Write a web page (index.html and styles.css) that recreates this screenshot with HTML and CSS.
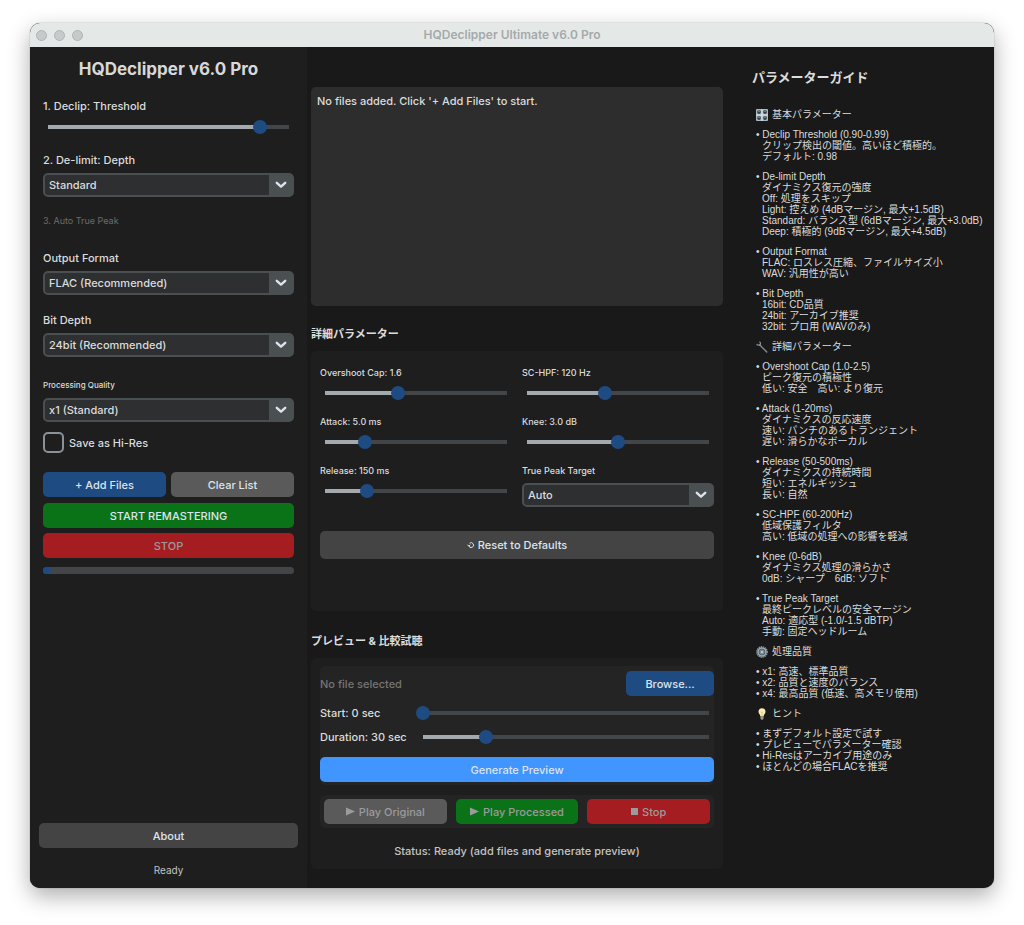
FILE: index.html
```html
<!DOCTYPE html>
<html lang="ja">
<head>
  <meta charset="UTF-8">
  <meta name="viewport" content="width=device-width, initial-scale=1">
  <title>HQDeclipper Ultimate v6.0 Pro</title>
  <link rel="stylesheet" href="styles.css">
</head>
<body>

  <svg width="0" height="0" class="defs" aria-hidden="true">
    <symbol id="chevron" viewBox="0 0 12 8"><path d="M1.8 1.8 6 5.6l4.2-3.8" fill="none" stroke="#dce4ee" stroke-width="2.4" stroke-linecap="round" stroke-linejoin="round"/></symbol>
    <symbol id="play" viewBox="0 0 8 8"><path d="M0 .5 8 4 0 7.5z" fill="currentColor"/></symbol>
  </svg>

  <div class="window">
    <header class="titlebar">
      <div class="lights"><span></span><span></span><span></span></div>
      <div class="titlebar-text">HQDeclipper Ultimate v6.0 Pro</div>
    </header>

    <div class="content">
      <aside class="sidebar">
        <div class="controls">
          <h1>HQDeclipper v6.0 Pro</h1>

          <label for="threshold" class="label">1. Declip: Threshold</label>
          <input type="range" id="threshold" min="0" max="100" value="88" style="--fill: 88%">

          <label for="depth" class="label">2. De-limit: Depth</label>
          <div class="select">
            <select id="depth"><option>Off</option><option>Light</option><option selected>Standard</option><option>Deep</option></select>
            <span class="arrow"><svg><use href="#chevron"/></svg></span>
          </div>

          <p class="hint">3. Auto True Peak</p>

          <label for="format" class="label">Output Format</label>
          <div class="select">
            <select id="format"><option>FLAC (Recommended)</option><option>WAV</option></select>
            <span class="arrow"><svg><use href="#chevron"/></svg></span>
          </div>

          <label for="bits" class="label">Bit Depth</label>
          <div class="select">
            <select id="bits"><option>24bit (Recommended)</option><option>16bit</option><option>32bit</option></select>
            <span class="arrow"><svg><use href="#chevron"/></svg></span>
          </div>

          <label for="quality" class="label small-label">Processing Quality</label>
          <div class="select">
            <select id="quality"><option>x1 (Standard)</option><option>x2</option><option>x4</option></select>
            <span class="arrow"><svg><use href="#chevron"/></svg></span>
          </div>

          <label class="check"><input type="checkbox"> Save as Hi-Res</label>

          <div class="file-buttons">
            <button class="btn blue">+ Add Files</button>
            <button class="btn gray">Clear List</button>
          </div>
          <button class="btn green start">START REMASTERING</button>
          <button class="btn red stop" disabled>STOP</button>
          <div class="progress"><span style="width: 3%"></span></div>
        </div>

        <button class="btn dark about">About</button>
        <p class="ready">Ready</p>
      </aside>

      <main class="main">
        <textarea class="file-list" aria-label="Files" readonly>No files added. Click '+ Add Files' to start.</textarea>

        <h2>詳細パラメーター</h2>
        <section class="panel advanced">
          <div class="params">
            <div class="param">
              <label for="overshoot">Overshoot Cap: 1.6</label>
              <input type="range" id="overshoot" min="0" max="100" value="40" style="--fill: 40%">
            </div>
            <div class="param">
              <label for="hpf">SC-HPF: 120 Hz</label>
              <input type="range" id="hpf" min="0" max="100" value="43" style="--fill: 43%">
            </div>
            <div class="param">
              <label for="attack">Attack: 5.0 ms</label>
              <input type="range" id="attack" min="0" max="100" value="22" style="--fill: 22%">
            </div>
            <div class="param">
              <label for="knee">Knee: 3.0 dB</label>
              <input type="range" id="knee" min="0" max="100" value="50" style="--fill: 50%">
            </div>
            <div class="param">
              <label for="release">Release: 150 ms</label>
              <input type="range" id="release" min="0" max="100" value="23" style="--fill: 23%">
            </div>
            <div class="param">
              <label for="peak">True Peak Target</label>
              <div class="select">
                <select id="peak"><option>Auto</option></select>
                <span class="arrow"><svg><use href="#chevron"/></svg></span>
              </div>
            </div>
          </div>
          <button class="btn dark reset">
            <svg class="reset-icon" viewBox="0 0 8 8"><path d="M2.6 2.3A2.4 2.4 0 1 1 1.8 4.6M.4 3.6l1.5 1.6L3.3 3.8" fill="none" stroke="currentColor"/></svg>
            Reset to Defaults
          </button>
        </section>

        <h2 class="preview-title">プレビュー &amp; 比較試聴</h2>
        <section class="panel preview">
          <div class="preview-form">
            <div class="file-row">
              <span>No file selected</span>
              <button class="btn blue browse">Browse...</button>
            </div>
            <div class="range-row">
              <label for="start">Start: 0 sec</label>
              <input type="range" id="start" min="0" max="100" value="0" style="--fill: 0%">
            </div>
            <div class="range-row">
              <label for="duration">Duration: 30 sec</label>
              <input type="range" id="duration" min="0" max="100" value="22" style="--fill: 22%">
            </div>
            <button class="btn light-blue generate">Generate Preview</button>
          </div>
          <div class="player">
            <button class="btn gray" disabled><svg class="glyph"><use href="#play"/></svg>Play Original</button>
            <button class="btn green" disabled><svg class="glyph"><use href="#play"/></svg>Play Processed</button>
            <button class="btn red" disabled><span class="square"></span>Stop</button>
          </div>
          <p class="status">Status: Ready (add files and generate preview)</p>
        </section>
      </main>

      <aside class="guide">
        <h2>パラメーターガイド</h2>
        <div class="guide-text">
          <h3>
            <svg viewBox="0 0 12 12"><rect width="12" height="12" rx="1" fill="#a9bac4"/><path d="M6 0v12M0 6h12" stroke="#dde5e9"/><g fill="#34424b"><circle cx="3" cy="3" r="1.9"/><circle cx="9" cy="3" r="1.9"/><circle cx="3" cy="9" r="1.9"/><circle cx="9" cy="9" r="1.9"/></g><path d="M3 1.5V3M9 1.5V3M3 7.5V9M9 7.5V9" stroke="#dde5e9" stroke-width=".7"/></svg>
            基本パラメーター
          </h3>
          <dl>
            <dt>• Declip Threshold (0.90-0.99)</dt>
            <dd>クリップ検出の閾値。高いほど積極的。</dd>
            <dd>デフォルト: 0.98</dd>
          </dl>
          <dl>
            <dt>• De-limit Depth</dt>
            <dd>ダイナミクス復元の強度</dd>
            <dd>Off: 処理をスキップ</dd>
            <dd>Light: 控えめ (4dBマージン, 最大+1.5dB)</dd>
            <dd>Standard: バランス型 (6dBマージン, 最大+3.0dB)</dd>
            <dd>Deep: 積極的 (9dBマージン, 最大+4.5dB)</dd>
          </dl>
          <dl>
            <dt>• Output Format</dt>
            <dd>FLAC: ロスレス圧縮、ファイルサイズ小</dd>
            <dd>WAV: 汎用性が高い</dd>
          </dl>
          <dl>
            <dt>• Bit Depth</dt>
            <dd>16bit: CD品質</dd>
            <dd>24bit: アーカイブ推奨</dd>
            <dd>32bit: プロ用 (WAVのみ)</dd>
          </dl>

          <h3>
            <svg viewBox="0 0 12 12"><path d="M3.6 3.8 10.8 11" stroke="#7b8790" stroke-width="1.5" stroke-linecap="round"/><path d="M.8 2.8a2 2 0 0 0 3.4.8A2 2 0 0 0 3.4.8" fill="none" stroke="#8b979f" stroke-width="1.2"/></svg>
            詳細パラメーター
          </h3>
          <dl>
            <dt>• Overshoot Cap (1.0-2.5)</dt>
            <dd>ピーク復元の積極性</dd>
            <dd>低い: 安全　高い: より復元</dd>
          </dl>
          <dl>
            <dt>• Attack (1-20ms)</dt>
            <dd>ダイナミクスの反応速度</dd>
            <dd>速い: パンチのあるトランジェント</dd>
            <dd>遅い: 滑らかなボーカル</dd>
          </dl>
          <dl>
            <dt>• Release (50-500ms)</dt>
            <dd>ダイナミクスの持続時間</dd>
            <dd>短い: エネルギッシュ</dd>
            <dd>長い: 自然</dd>
          </dl>
          <dl>
            <dt>• SC-HPF (60-200Hz)</dt>
            <dd>低域保護フィルタ</dd>
            <dd>高い: 低域の処理への影響を軽減</dd>
          </dl>
          <dl>
            <dt>• Knee (0-6dB)</dt>
            <dd>ダイナミクス処理の滑らかさ</dd>
            <dd>0dB: シャープ　6dB: ソフト</dd>
          </dl>
          <dl>
            <dt>• True Peak Target</dt>
            <dd>最終ピークレベルの安全マージン</dd>
            <dd>Auto: 適応型 (-1.0/-1.5 dBTP)</dd>
            <dd>手動: 固定ヘッドルーム</dd>
          </dl>

          <h3>
            <svg viewBox="0 0 12 12"><circle cx="6" cy="6" r="5.2" fill="none" stroke="#8796a0" stroke-width="1.4" stroke-dasharray="1.3 .75"/><circle cx="6" cy="6" r="4" fill="#4a5760" stroke="#9aabb5" stroke-width="1.6"/><path d="M6 2.500v7M2.500 6h7M3.500 3.500l5 5M8.500 3.500l-5 5" stroke="#8fa0ab" stroke-width=".7"/><circle cx="6" cy="6" r="1.500" fill="#b5c4cd"/></svg>
            処理品質
          </h3>
          <ul>
            <li>• x1: 高速、標準品質</li>
            <li>• x2: 品質と速度のバランス</li>
            <li>• x4: 最高品質 (低速、高メモリ使用)</li>
          </ul>

          <h3>
            <svg viewBox="0 0 12 12"><path d="M6 .3a3.5 3.5 0 0 0-3.5 3.5C2.5 5.8 4.2 6.3 4.400 8.600h3.200C7.800 6.300 9.500 5.800 9.500 3.800A3.500 3.500 0 0 0 6 .3z" fill="#fbedb8"/><path d="M5 3.500 6 5l1-1.500M6 5v3.500" fill="none" stroke="#d9b452" stroke-width=".6"/><path d="M4.500 8.600h3v2L6.700 11.700H5.300l-.8-1.100z" fill="#9a9a90"/></svg>
            ヒント
          </h3>
          <ul>
            <li>• まずデフォルト設定で試す</li>
            <li>• プレビューでパラメーター確認</li>
            <li>• Hi-Resはアーカイブ用途のみ</li>
            <li>• ほとんどの場合FLACを推奨</li>
          </ul>
        </div>
      </aside>
    </div>
  </div>

</body>
</html>
```
FILE: styles.css
```css
* {
  box-sizing: border-box;
}

body {
  margin: 0;
  min-height: 100vh;
  padding: 23px 30px 37px;
  display: flex;
  background: #fff;
  color: #dcdcdc;
  font-family: Inter, "Noto Sans CJK JP", sans-serif;
  font-size: 11px;
  font-weight: 500;
  line-height: 20px;
}

h1, h2, h3, p, dl, dd, ul {
  margin: 0;
  padding: 0;
}

button, select, input, textarea {
  font: inherit;
  color: inherit;
  margin: 0;
}

.defs {
  position: absolute;
}

.window {
  flex: 1;
  min-width: 0;
  display: flex;
  flex-direction: column;
  border-radius: 10px;
  overflow: hidden;
  background: #191919;
  box-shadow: 0 0 1px rgba(0, 0, 0, 0.6), 0 8px 22px rgba(0, 0, 0, 0.32);
}

/* title bar */
.titlebar {
  height: 24px;
  flex: none;
  display: grid;
  grid-template-columns: 1fr auto 1fr;
  align-items: center;
  background: #e4e9e8;
  color: #a6a9a9;
  font-size: 12px;
  font-weight: 600;
}

.lights {
  display: flex;
  gap: 7px;
  padding-left: 6px;
}

.lights span {
  width: 11px;
  height: 11px;
  border-radius: 50%;
  background: #c6caca;
  border: 1px solid #afb3b3;
}

.content {
  flex: 1;
  display: flex;
}

/* sidebar */
.sidebar {
  flex: 0 0 277px;
  display: flex;
  flex-direction: column;
  padding: 10px 9px 8px;
  background: #1e1e1e;
}

.controls {
  display: flex;
  flex-direction: column;
  padding: 0 4px;
  margin-bottom: auto;
}

h1 {
  font-size: 17px;
  line-height: 24px;
  text-align: center;
  color: #d8d8d8;
}

.label {
  margin: 15px 0 3px;
}

.small-label {
  margin-top: 18px;
  font-size: 8px;
}

.hint {
  margin: 14px 0 2px;
  font-size: 9px;
  font-weight: 400;
  color: #6c6c6c;
}

/* sliders */
input[type="range"] {
  appearance: none;
  display: block;
  height: 16px;
  margin: 0 -2px;
  background: linear-gradient(to right, #a4a9ad var(--fill), #434648 var(--fill)) center / calc(100% - 14px) 4px no-repeat;
}

input[type="range"]::-webkit-slider-thumb {
  appearance: none;
  width: 14px;
  height: 14px;
  border-radius: 50%;
  background: #1f4b83;
}

/* dropdowns */
.select {
  display: flex;
  height: 24px;
  border: 2px solid #4a4f51;
  border-radius: 5px;
  background: #2e2f31;
}

.select select {
  appearance: none;
  flex: 1;
  min-width: 0;
  border: 0;
  padding: 0 4px;
  background: none;
}

.arrow {
  width: 23px;
  display: flex;
  align-items: center;
  justify-content: center;
  background: #4a4f51;
}

.arrow svg {
  width: 12px;
  height: 8px;
}

.check {
  display: flex;
  align-items: center;
  gap: 5px;
  margin-top: 10px;
}

.check input {
  appearance: none;
  width: 21px;
  height: 21px;
  border: 2px solid #8b9297;
  border-radius: 5px;
}

/* buttons */
.btn {
  height: 25px;
  border: 0;
  border-radius: 5px;
  padding: 0;
  display: flex;
  align-items: center;
  justify-content: center;
  color: #dce4ee;
}

.btn:disabled {
  color: #9b9b9b;
}

.blue { background: #1f4b83; }
.gray { background: #5a5a5a; }
.dark { background: #444; }
.green { background: #0a7318; }
.red { background: #a61d21; }
.light-blue { background: #4195ff; }

.file-buttons {
  display: grid;
  grid-template-columns: 1fr 1fr;
  gap: 5px;
  margin-top: 19px;
}

.start {
  margin-top: 6px;
}

.stop {
  margin-top: 5px;
}

.progress {
  height: 7px;
  margin-top: 9px;
  border-radius: 4px;
  background: #434648;
}

.progress span {
  display: block;
  height: 7px;
  border-radius: 4px;
  background: #1f4b83;
}

.ready {
  margin-top: 12px;
  text-align: center;
  font-size: 10px;
  font-weight: 400;
  color: #c4c4c4;
}

/* middle column */
.main {
  flex: 1;
  min-width: 0;
  display: flex;
  flex-direction: column;
  padding: 40px 17px 19px 4px;
}

.file-list {
  flex: 1;
  min-height: 219px;
  padding: 4px 6px;
  border: 0;
  border-radius: 5px;
  resize: none;
  background: #2d2d2d;
}

h2 {
  margin: 18px 0 7px;
  font-size: 11px;
  line-height: 20px;
}

.preview-title {
  margin-top: 20px;
}

.panel {
  display: flex;
  flex-direction: column;
  padding: 8px 9px;
  border-radius: 5px;
  background: #1e1e1e;
}

.advanced {
  min-height: 260px;
  padding-top: 14px;
}

.params {
  display: grid;
  grid-template-columns: 1fr 1fr;
  gap: 13px 10px;
}

.param {
  display: flex;
  flex-direction: column;
  gap: 4px;
}

.param > label {
  font-size: 9px;
  line-height: 16px;
}

.reset {
  height: 28px;
  margin-top: 24px;
  gap: 3px;
}

.reset-icon {
  width: 8px;
  height: 8px;
}

.preview-form {
  display: flex;
  flex-direction: column;
  padding: 5px 0 3px;
  border-radius: 5px;
  background: #242424;
}

.file-row {
  display: flex;
  align-items: center;
  justify-content: space-between;
  margin-bottom: 3px;
  color: #757575;
}

.browse {
  width: 88px;
}

.range-row {
  display: grid;
  grid-template-columns: 98px 1fr;
  align-items: center;
  margin-top: 4px;
}

.generate {
  margin-top: 10px;
}

.player {
  display: grid;
  grid-template-columns: repeat(3, 1fr);
  gap: 9px;
  margin-top: 10px;
  padding: 4px;
  border-radius: 5px;
  background: #242424;
}

.glyph {
  width: 9px;
  height: 9px;
  margin-right: 4px;
}

.square {
  width: 7px;
  height: 7px;
  margin-right: 4px;
  background: currentColor;
}

.status {
  margin-top: 13px;
  text-align: center;
  color: #c4c4c4;
}

/* parameter guide */
.guide {
  flex: 0 0 254px;
  padding: 20px 0 20px 12px;
}

.guide h2 {
  margin: 0 0 22px;
  font-size: 13px;
}

.guide-text {
  display: flex;
  flex-direction: column;
  gap: 9px;
  padding-left: 4px;
  font-family: "Liberation Sans", "Noto Sans CJK JP", sans-serif;
  font-size: 10px;
  font-weight: 400;
  line-height: 11px;
  white-space: nowrap;
}

.guide h3 {
  display: flex;
  align-items: center;
  gap: 4px;
  height: 11px;
  font-size: 10px;
  font-weight: normal;
}

.guide h3 svg {
  width: 12px;
  height: 12px;
}

.guide dt,
.guide dd,
.guide li {
  height: 11px;
}

.guide dd {
  padding-left: 6px;
}

.guide ul {
  list-style: none;
}
```
